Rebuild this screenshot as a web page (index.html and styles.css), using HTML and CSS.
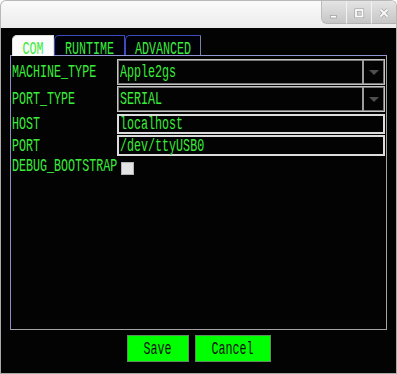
FILE: index.html
```html
<!DOCTYPE html>
<html lang="en">
<head>
    <meta charset="UTF-8">
    <title>Settings</title>
    <link rel="stylesheet" href="styles.css">
</head>
<body>
    <div class="window">
        <div class="titlebar">
            <div class="controls">
                <span class="ctl first">
                    <svg width="12" height="12" viewBox="0 0 12 12"><rect x="2.5" y="8.5" width="6" height="2.5" fill="#fbfbfb" stroke="#a4a4a4" stroke-width="0.8"/></svg>
                </span>
                <span class="ctl">
                    <svg width="12" height="12" viewBox="0 0 12 12"><rect x="3" y="3" width="6.5" height="6.5" fill="none" stroke="#a4a4a4" stroke-width="3.2"/><rect x="3" y="3" width="6.5" height="6.5" fill="none" stroke="#fbfbfb" stroke-width="1.8"/></svg>
                </span>
                <span class="ctl">
                    <svg width="12" height="12" viewBox="0 0 12 12"><path d="M2.5 2.5 L9.5 9.5 M9.5 2.5 L2.5 9.5" stroke="#a4a4a4" stroke-width="3.2"/><path d="M2.5 2.5 L9.5 9.5 M9.5 2.5 L2.5 9.5" stroke="#fbfbfb" stroke-width="1.8"/></svg>
                </span>
            </div>
        </div>

        <div class="content">
            <div class="tabs">
                <div class="tab active"><span class="t">COM</span></div>
                <div class="tab"><span class="t">RUNTIME</span></div>
                <div class="tab last"><span class="t">ADVANCED</span></div>
            </div>

            <div class="panel">
                <div class="form">
                    <div class="label"><span class="t">MACHINE_TYPE</span></div>
                    <div class="combo">
                        <div class="value"><span class="t">Apple2gs</span></div>
                        <div class="arrow"><span class="tri"></span></div>
                    </div>

                    <div class="label"><span class="t">PORT_TYPE</span></div>
                    <div class="combo">
                        <div class="value"><span class="t">SERIAL</span></div>
                        <div class="arrow"><span class="tri"></span></div>
                    </div>

                    <div class="label"><span class="t">HOST</span></div>
                    <div class="field"><span class="t">localhost</span></div>

                    <div class="label"><span class="t">PORT</span></div>
                    <div class="field"><span class="t">/dev/ttyUSB0</span></div>

                    <div class="label"><span class="t">DEBUG_BOOTSTRAP</span></div>
                    <div class="check-cell"><span class="checkbox"></span></div>
                </div>
            </div>

            <div class="actions">
                <div class="btn save"><span class="t">Save</span></div>
                <div class="btn cancel"><span class="t">Cancel</span></div>
            </div>
        </div>
    </div>
</body>
</html>
```

FILE: styles.css
```css
body {
    margin: 0;
    background-color: #ffffff;
    font-family: 'Liberation Mono', 'DejaVu Sans Mono', monospace;
}
.window {
    width: 397px;
    height: 374px;
    display: flex;
    flex-direction: column;
}
.titlebar {
    height: 28px;
    box-sizing: border-box;
    background: linear-gradient(#fafafa, #ececec);
    border: 1px solid #b8b8b8;
    border-bottom: none;
    border-radius: 6px 6px 0 0;
    display: flex;
    justify-content: flex-end;
    overflow: hidden;
}
.controls {
    display: flex;
    height: 24px;
    margin-top: -1px;
}
.ctl {
    width: 25px;
    height: 24px;
    box-sizing: border-box;
    display: flex;
    align-items: center;
    justify-content: center;
    padding-top: 2px;
    background: linear-gradient(#e6e6e6, #c6c6c6);
    border-left: 1px solid #f2f2f2;
    border-bottom: 1px solid #b4b4b4;
}
.ctl.first {
    border-bottom-left-radius: 6px;
    border-left: 1px solid #bcbcbc;
}

/* green screen */
.content {
    flex: 1;
    background-color: #030303;
    border: 1px solid #a8a8a8;
    border-top: none;
    padding: 7px 9px 0 9px;
    display: flex;
    flex-direction: column;
}
.t {
    display: inline-block;
    font-size: 11.7px;
    line-height: 12px;
    color: #3aec3a;
    transform: scaleY(1.6);
    white-space: pre;
}
.tabs {
    display: flex;
    margin-left: 2px;
    height: 20px;
    position: relative;
    z-index: 1;
}
.tab {
    box-sizing: border-box;
    height: 20px;
    padding-top: 3px;
    border: 1px solid #3c4cc0;
    border-bottom: none;
    border-top-left-radius: 5px;
    background-color: #000008;
    text-align: center;
}
.tab:nth-child(2) { width: 71px; }
.tab.last {
    width: 76px;
    border-right-color: #7c80a8;
}
.tab.active {
    width: 42px;
    height: 21px;
    background-color: #fbfbfb;
    border-color: #e0e0e0;
}
.panel {
    height: 275px;
    box-sizing: border-box;
    border: 1px solid #a4a4a4;
    border-top-color: #9096d4;
    border-left-color: #8c8cc8;
    padding: 3px 1px 0 1px;
}
.form {
    display: grid;
    grid-template-columns: 105px 1fr;
    grid-template-rows: 26px 26px 21px 21px 18px;
    row-gap: 1px;
}
.form > div:nth-child(5),
.form > div:nth-child(6) {
    margin-top: 1px;
}
.label {
    display: flex;
    align-items: center;
}
.combo {
    display: flex;
    box-sizing: border-box;
    border: 1px solid #c4c4c4;
    box-shadow: inset 0 0 0 1px #767676;
}
.combo .value {
    flex: 1;
    display: flex;
    align-items: center;
    padding-left: 2px;
}
.combo .arrow {
    width: 20px;
    display: flex;
    align-items: center;
    justify-content: center;
    border-left: 2px solid #9c9c9c;
}
.tri {
    width: 0;
    height: 0;
    border-left: 5px solid transparent;
    border-right: 5px solid transparent;
    border-top: 5px solid #4e4e4e;
}
.field {
    display: flex;
    align-items: center;
    box-sizing: border-box;
    border: 2px solid #dcdcdc;
    padding-left: 1px;
}
.check-cell {
    display: flex;
    align-items: center;
    padding-left: 4px;
    padding-top: 4px;
}
.checkbox {
    width: 13px;
    height: 13px;
    box-sizing: border-box;
    background-color: #e4e4e4;
    border: 1px solid #b4b4b4;
}
.actions {
    display: flex;
    justify-content: center;
    gap: 6px;
    margin-top: 5px;
}
.btn {
    height: 27px;
    box-sizing: border-box;
    background-color: #00ff00;
    border: 1px solid #5f8f5f;
    display: flex;
    align-items: center;
    justify-content: center;
}
.btn .t { color: #101010; }
.save { width: 62px; }
.cancel { width: 76px; }
```
